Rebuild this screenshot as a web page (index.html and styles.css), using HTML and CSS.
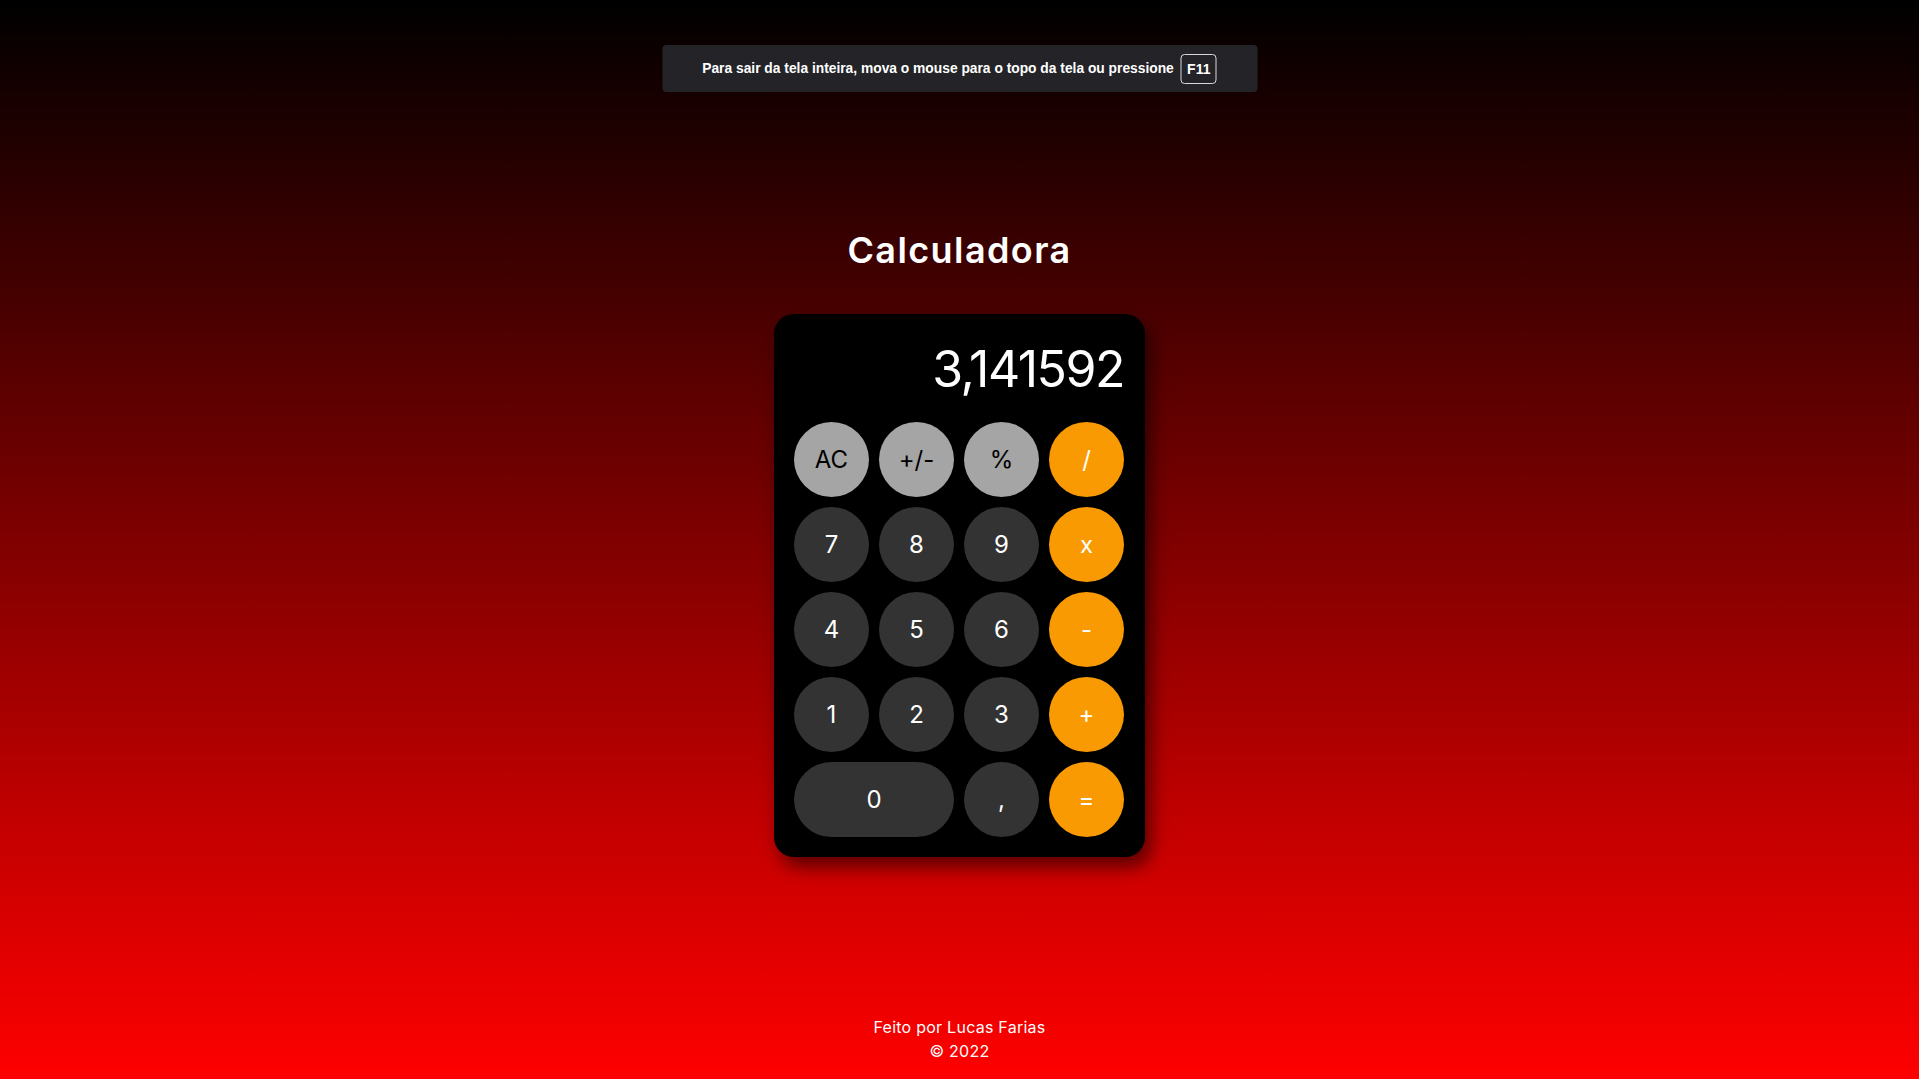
FILE: index.html
```html
<!DOCTYPE html>
<html lang="pt-BR">
<head>
<meta charset="utf-8">
<title>Calculadora</title>
<link rel="stylesheet" href="styles.css">
</head>
<body>
  <div class="fs-notice">
    <span class="fs-text">Para sair da tela inteira, mova o mouse para o topo da tela ou pressione</span>
    <span class="fs-key">F11</span>
  </div>

  <main class="main">
    <h1 class="title">Calculadora</h1>
    <div class="calc">
      <div class="display">3,141592</div>
      <div class="keys">
        <button class="key key-light">AC</button>
        <button class="key key-light">+/-</button>
        <button class="key key-light">%</button>
        <button class="key key-op">/</button>

        <button class="key">7</button>
        <button class="key">8</button>
        <button class="key">9</button>
        <button class="key key-op">x</button>

        <button class="key">4</button>
        <button class="key">5</button>
        <button class="key">6</button>
        <button class="key key-op">-</button>

        <button class="key">1</button>
        <button class="key">2</button>
        <button class="key">3</button>
        <button class="key key-op">+</button>

        <button class="key key-wide">0</button>
        <button class="key">,</button>
        <button class="key key-op">=</button>
      </div>
    </div>
  </main>

  <footer class="footer">
    <p class="footer-line">Feito por Lucas Farias</p>
    <p class="footer-line">© 2022</p>
  </footer>
</body>
</html>
```

FILE: styles.css
```css
* {
  box-sizing: border-box;
}

html, body {
  margin: 0;
  padding: 0;
}

body {
  height: 100vh;
  display: flex;
  flex-direction: column;
  align-items: center;
  background: linear-gradient(180deg, #000000 0%, #ff0000 100%);
  font-family: "Inter", "Open Sans", sans-serif;
  color: #ffffff;
  overflow: hidden;
}

/* Browser fullscreen notice overlay */
.fs-notice {
  position: absolute;
  top: 45px;
  left: 50%;
  transform: translateX(-50%);
  width: 595px;
  height: 47px;
  background: #242428;
  border-radius: 4px;
  display: flex;
  align-items: center;
  justify-content: center;
  gap: 7px;
  font-family: "Liberation Sans", Arial, sans-serif;
  font-weight: 700;
  font-size: 13.8px;
  color: #ffffff;
}

.fs-key {
  display: inline-flex;
  align-items: center;
  justify-content: center;
  width: 36px;
  height: 30px;
  border: 1px solid #d8d8d8;
  border-radius: 4px;
  font-size: 14px;
}

.main {
  display: flex;
  flex-direction: column;
  align-items: center;
}

.title {
  margin: 229px 0 0;
  font-size: 36px;
  font-weight: 600;
  line-height: 42px;
  letter-spacing: 1.4px;
}

.calc {
  margin-top: 43px;
  width: 371px;
  padding: 20px 21px 20px 20px;
  background: #000000;
  border-radius: 20px;
  box-shadow: 6px 10px 18px rgba(0, 0, 0, 0.55);
  display: flex;
  flex-direction: column;
  gap: 10px;
}

.display {
  height: 78px;
  padding-top: 9px;
  text-align: right;
  font-size: 50px;
  font-weight: 400;
  line-height: 52px;
  letter-spacing: -1.5px;
}

.keys {
  display: grid;
  grid-template-columns: repeat(4, 75px);
  grid-auto-rows: 75px;
  gap: 10px;
}

.key {
  border: none;
  border-radius: 38px;
  background: #333333;
  color: #ffffff;
  font-family: "Inter", "Open Sans", sans-serif;
  font-size: 24px;
  font-weight: 400;
  padding: 0;
  display: flex;
  align-items: center;
  justify-content: center;
}

.key-light {
  background: #a5a5a5;
  color: #000000;
}

.key-op {
  background: #fa9a03;
  color: #ffffff;
}

.key-wide {
  grid-column: span 2;
}

.footer {
  margin-top: auto;
  padding-bottom: 16px;
  text-align: center;
}

.footer-line {
  margin: 0;
  font-size: 16px;
  line-height: 24px;
  letter-spacing: 0.25px;
}
```
